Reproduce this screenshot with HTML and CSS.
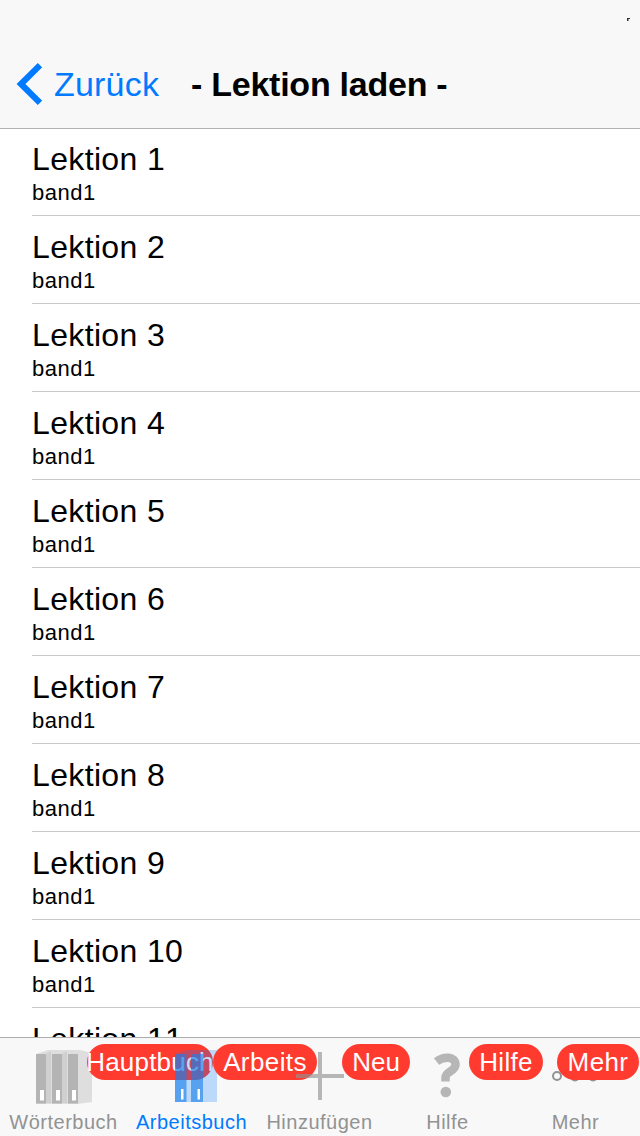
FILE: index.html
```html
<!DOCTYPE html>
<html lang="de">
<head>
<meta charset="utf-8">
<title>Lektion laden</title>
<link rel="stylesheet" href="styles.css">
</head>
<body>
<div class="app">
  <header class="navbar">
    <svg class="status-mark" viewBox="0 0 4 4"><path d="M0 0h3v1H1.500v2H0z" fill="#333"/></svg>
    <a class="back"><svg class="chevron" viewBox="0 0 26 42"><path d="M24 2.200L5 21l19 18.800" fill="none" stroke="#007aff" stroke-width="6.200"/></svg><span>Zurück</span></a>
    <h1 class="title">- Lektion laden -</h1>
  </header>
  <main class="list">
    <div class="row"><div class="name">Lektion 1</div><div class="sub">band1</div></div>
    <div class="row"><div class="name">Lektion 2</div><div class="sub">band1</div></div>
    <div class="row"><div class="name">Lektion 3</div><div class="sub">band1</div></div>
    <div class="row"><div class="name">Lektion 4</div><div class="sub">band1</div></div>
    <div class="row"><div class="name">Lektion 5</div><div class="sub">band1</div></div>
    <div class="row"><div class="name">Lektion 6</div><div class="sub">band1</div></div>
    <div class="row"><div class="name">Lektion 7</div><div class="sub">band1</div></div>
    <div class="row"><div class="name">Lektion 8</div><div class="sub">band1</div></div>
    <div class="row"><div class="name">Lektion 9</div><div class="sub">band1</div></div>
    <div class="row"><div class="name">Lektion 10</div><div class="sub">band1</div></div>
    <div class="row"><div class="name">Lektion 11</div></div>
  </main>
  <nav class="tabbar">
    <div class="tab">
      <svg class="icon" viewBox="0 0 128 72">
        <path d="M36 16l12-4h32l12 3v49l-14 2H36z" fill="#dedede"/>
        <path d="M46 16l5-3v52h-5zM62 16l5-3v52h-5z" fill="#d0d0d0"/>
        <path d="M36 16h10v49.500H36zM52 16h10v49.500H52zM68 16h10v49.500H68z" fill="#b4b4b4"/>
        <path d="M40 52h4v10.500h-4zM56 52h4v10.500h-4zM72 52h4v10.500h-4z" fill="#fff"/>
      </svg>
      <span class="badge b1">Hauptbuch</span><span class="label">Wörterbuch</span>
    </div>
    <div class="tab active">
      <svg class="icon" viewBox="0 0 128 72">
        <path d="M47 16l13-4h29v52H47z" fill="#007aff" fill-opacity=".24"/>
        <path d="M47 16h11.500v48H47zM63 16h12v48H63z" fill="#187fea" fill-opacity=".62"/>
        <path d="M53 51h2.500v10.500H53zM69.500 51H72v10.500h-2.500z" fill="#fff"/>
      </svg>
      <span class="badge b2">Arbeits</span><span class="label">Arbeitsbuch</span>
    </div>
    <div class="tab">
      <svg class="icon" viewBox="0 0 128 72"><path d="M62 14h4v22h22v4H66v22h-4V40H40v-4h22z" fill="#929292" fill-opacity=".65"/></svg>
      <span class="badge b3">Neu</span><span class="label">Hinzufügen</span>
    </div>
    <div class="tab">
      <svg class="icon" viewBox="0 0 128 72"><path d="M52.500 23.500c7-5.500 19-5.500 19 3 0 7-10 6.500-10 13v4" fill="none" stroke="#b6b6b6" stroke-width="8.500"/><circle cx="61.800" cy="54" r="5.300" fill="#b6b6b6"/></svg>
      <span class="badge b4">Hilfe</span><span class="label">Hilfe</span>
    </div>
    <div class="tab">
      <svg class="icon" viewBox="0 0 128 72"><g fill="none" stroke="#929292" stroke-width="2"><circle cx="45" cy="38" r="4"/><circle cx="63" cy="38.500" r="4"/><circle cx="81" cy="38.500" r="4"/></g></svg>
      <span class="badge b5">Mehr</span><span class="label">Mehr</span>
    </div>
  </nav>
</div>
</body>
</html>
```
FILE: styles.css
```css
* { box-sizing: border-box; }
body { margin: 0; background: #fff; color: #000; font-family: "Liberation Sans", Arial, sans-serif; font-kerning: none; }
.app { display: flex; flex-direction: column; width: 640px; height: 1136px; overflow: hidden; }
.navbar { position: relative; display: flex; flex: none; align-items: center; height: 129px; padding: 40px 0 0 16px; background: #f8f8f8; border-bottom: 1px solid #b2b2b2; }
.status-mark { position: absolute; left: 627px; top: 18px; width: 4px; height: 4px; }
.back { display: flex; align-items: center; width: 175px; gap: 12px; color: #007aff; font-size: 34px; letter-spacing: .2px; }
.chevron { width: 26px; height: 42px; }
.title { margin: 0; font-size: 34px; font-weight: bold; letter-spacing: -.25px; white-space: nowrap; }
.list { flex: 1; min-height: 0; overflow: hidden; padding-left: 32px; }
.row { height: 88px; padding-top: 12px; border-bottom: 1px solid #c8c7cc; }
.row:first-child { height: 87px; padding-top: 11px; }
.name { height: 39px; line-height: 38px; font-size: 32px; letter-spacing: .35px; }
.sub { height: 28px; line-height: 28px; font-size: 22px; letter-spacing: .5px; }
.tabbar { display: flex; flex: none; height: 99px; background: #f8f8f8; border-top: 1px solid #adadad; }
.tab { position: relative; display: flex; flex-direction: column; width: 128px; color: #929292; }
.active { color: #007aff; }
.icon { width: 128px; height: 72px; }
.badge { position: absolute; top: 6px; height: 36px; border-radius: 18px; display: flex; justify-content: center; background: #ff3b30; color: #fff; font-size: 26px; line-height: 36px; white-space: nowrap; }
.b1 { left: 87px; width: 126px; letter-spacing: .2px; }
.b2 { left: 85px; width: 104px; letter-spacing: .4px; }
.b3 { left: 86px; width: 68px; }
.b4 { left: 85px; width: 74px; letter-spacing: .3px; }
.b5 { left: 45px; width: 82px; letter-spacing: .4px; }
.label { height: 24px; padding-right: 1px; line-height: 24px; font-size: 20px; letter-spacing: .5px; text-align: center; }
```
